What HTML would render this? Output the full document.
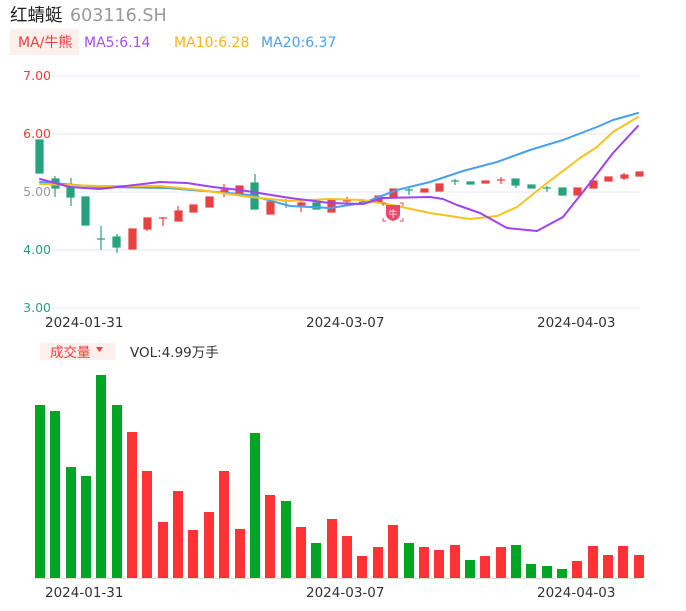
<!DOCTYPE html>
<html><head><meta charset="utf-8"><style>
body{margin:0;background:#fff;width:686px;height:606px;overflow:hidden;font-family:"Liberation Sans","DejaVu Sans","Noto Sans CJK SC",sans-serif}
svg text{font-family:"DejaVu Sans","Noto Sans CJK SC",sans-serif}
</style></head><body>
<svg width="686" height="606" viewBox="0 0 686 606" xmlns="http://www.w3.org/2000/svg">
<text x="10" y="21" font-size="17.5" fill="#222">红蜻蜓</text>
<text x="70" y="21" font-size="17.5" fill="#999">603116.SH</text>
<rect x="10" y="29" width="69" height="26" fill="#fdf0ec"/>
<text x="18" y="47" font-size="14" fill="#f03c3c">MA/牛熊</text>
<text x="84" y="47" font-size="14" fill="#a24ff2">MA5:6.14</text>
<text x="174" y="47" font-size="14" fill="#f8b519">MA10:6.28</text>
<text x="261" y="47" font-size="14" fill="#4aa0f0">MA20:6.37</text>
<g stroke="#e3e8f4" stroke-width="1">
<line x1="52" y1="76" x2="640" y2="76"/><line x1="52" y1="134" x2="640" y2="134"/><line x1="52" y1="192" x2="640" y2="192"/><line x1="52" y1="250" x2="640" y2="250"/><line x1="52" y1="308" x2="640" y2="308"/>
</g>
<g font-size="12.5" text-anchor="end">
<text x="51" y="80" fill="#f03c3c">7.00</text><text x="51" y="138" fill="#f03c3c">6.00</text><text x="51" y="196" fill="#999">5.00</text><text x="51" y="254" fill="#26a17b">4.00</text><text x="51" y="312" fill="#26a17b">3.00</text>
</g>
<g fill="#26a27f" stroke="#26a27f" stroke-width="1.2">
<rect x="36" y="140" width="7" height="33"/>
<line x1="55" y1="176" x2="55" y2="197"/><rect x="52" y="179" width="7" height="9"/>
<line x1="71" y1="178" x2="71" y2="206"/><rect x="67" y="187" width="7" height="10"/>
<rect x="82" y="197" width="7" height="28"/>
<line x1="101" y1="226" x2="101" y2="250"/><line x1="97" y1="239" x2="105" y2="239"/>
<line x1="117" y1="234" x2="117" y2="253"/><rect x="113" y="237" width="7" height="10"/>
<line x1="255" y1="174" x2="255" y2="209"/><rect x="251" y="183" width="7" height="26"/>
<line x1="286" y1="199" x2="286" y2="208"/><line x1="282" y1="201" x2="290" y2="201"/>
<rect x="313" y="203" width="7" height="6"/>
<line x1="409" y1="187" x2="409" y2="195"/><line x1="405" y1="190" x2="413" y2="190"/>
<line x1="455" y1="179" x2="455" y2="185"/><line x1="451" y1="181" x2="459" y2="181"/>
<rect x="467" y="182" width="7" height="2"/>
<line x1="516" y1="179" x2="516" y2="188"/><rect x="512" y="179" width="7" height="6"/>
<rect x="528" y="185" width="7" height="3"/>
<line x1="547" y1="186" x2="547" y2="192"/><line x1="543" y1="188" x2="551" y2="188"/>
<rect x="559" y="188" width="7" height="7"/>
</g>
<g fill="#e84142" stroke="#e84142" stroke-width="1.2">
<rect x="129" y="229" width="7" height="20"/>
<line x1="147" y1="218" x2="147" y2="231"/><rect x="144" y="218" width="7" height="11"/>
<line x1="163" y1="217" x2="163" y2="226"/><line x1="159" y1="218" x2="167" y2="218"/>
<line x1="178" y1="206" x2="178" y2="221"/><rect x="175" y="211" width="7" height="10"/>
<rect x="190" y="205" width="7" height="7"/>
<rect x="206" y="197" width="7" height="10"/>
<line x1="224" y1="184" x2="224" y2="197"/><rect x="221" y="190" width="7" height="3"/>
<rect x="236" y="186" width="7" height="7"/>
<rect x="267" y="202" width="7" height="12"/>
<line x1="301" y1="201" x2="301" y2="212"/><rect x="298" y="203" width="7" height="2"/>
<rect x="328" y="200" width="7" height="12"/>
<line x1="347" y1="197" x2="347" y2="205"/><line x1="343" y1="201" x2="351" y2="201"/>
<line x1="363" y1="199" x2="363" y2="205"/><line x1="359" y1="202" x2="367" y2="202"/>
<rect x="375" y="196" width="7" height="6"/>
<rect x="390" y="189" width="7" height="8"/>
<rect x="421" y="189" width="7" height="3"/>
<rect x="436" y="184" width="7" height="7"/>
<rect x="482" y="181" width="7" height="2"/>
<line x1="501" y1="177" x2="501" y2="184"/><line x1="497" y1="180" x2="505" y2="180"/>
<rect x="574" y="188" width="7" height="7"/>
<rect x="590" y="181" width="7" height="7"/>
<rect x="605" y="177" width="7" height="4"/>
<line x1="624" y1="173" x2="624" y2="180"/><rect x="621" y="175" width="7" height="3"/>
<rect x="636" y="172" width="7" height="4"/>
</g>
<g fill="none" stroke-width="2" stroke-linejoin="round" stroke-linecap="round">
<polyline stroke="#4aa0f0" points="40,182 100,187 167,188 217,192 250,195 290,206 330,208 363,203 397,190 430,182 463,171 497,162 530,150 563,140 597,127 613,120 638,113"/>
<polyline stroke="#f8c21c" points="40,184 100,186 160,186 200,190 250,197 290,201 330,199 363,200 397,206 430,213 470,219 497,216 517,207 547,183 580,158 597,147 613,132 638,117"/>
<polyline stroke="#a042f2" points="40,179 70,187 100,189 160,182 187,183 213,187 240,190 290,198 330,203 363,204 383,198 430,197 443,199 457,205 480,213 507,228 537,231 563,217 590,183 613,153 638,126"/>
</g>
<g>
<path d="M386 205 h14 v9 q0 5 -7 7 q-7 -2 -7 -7z" fill="#f0476a"/>
<text x="393" y="217" font-size="9" fill="#fff" text-anchor="middle">牛</text>
<path d="M383 206 v-3 h3 M400 203 h3 v3 M383 218 v3 h3 M400 221 h3 v-3" stroke="#f0476a" fill="none" stroke-width="1"/>
</g>
<g font-size="13.5" fill="#333">
<text x="45" y="327">2024-01-31</text><text x="306" y="327">2024-03-07</text><text x="537" y="327">2024-04-03</text>
</g>
<rect x="40" y="343" width="75" height="17" fill="#fdf0ec"/>
<text x="50" y="357" font-size="13.5" fill="#f03c3c">成交量</text>
<path d="M96 347 h7 l-3.5 5z" fill="#f03c3c"/>
<text x="130" y="357" font-size="13.5" fill="#333">VOL:4.99万手</text>
<line x1="35" y1="578.5" x2="640" y2="578.5" stroke="#ddd"/>
<g fill="#00a523">
<rect x="35" y="405" width="10" height="173"/><rect x="50" y="411" width="10" height="167"/><rect x="66" y="467" width="10" height="111"/><rect x="81" y="476" width="10" height="102"/><rect x="96" y="375" width="10" height="203"/><rect x="112" y="405" width="10" height="173"/>
<rect x="250" y="433" width="10" height="145"/><rect x="281" y="501" width="10" height="77"/><rect x="311" y="543" width="10" height="35"/>
<rect x="404" y="543" width="10" height="35"/><rect x="465" y="560" width="10" height="18"/><rect x="511" y="545" width="10" height="33"/><rect x="526" y="564" width="10" height="14"/><rect x="542" y="566" width="10" height="12"/><rect x="557" y="569" width="10" height="9"/>
</g>
<g fill="#ff3236">
<rect x="127" y="432" width="10" height="146"/><rect x="142" y="471" width="10" height="107"/><rect x="158" y="522" width="10" height="56"/><rect x="173" y="491" width="10" height="87"/><rect x="188" y="530" width="10" height="48"/><rect x="204" y="512" width="10" height="66"/><rect x="219" y="471" width="10" height="107"/><rect x="235" y="529" width="10" height="49"/>
<rect x="265" y="495" width="10" height="83"/><rect x="296" y="527" width="10" height="51"/><rect x="327" y="519" width="10" height="59"/><rect x="342" y="536" width="10" height="42"/><rect x="357" y="556" width="10" height="22"/><rect x="373" y="547" width="10" height="31"/><rect x="388" y="525" width="10" height="53"/>
<rect x="419" y="547" width="10" height="31"/><rect x="434" y="550" width="10" height="28"/><rect x="450" y="545" width="10" height="33"/><rect x="480" y="556" width="10" height="22"/><rect x="496" y="547" width="10" height="31"/>
<rect x="572" y="561" width="10" height="17"/><rect x="588" y="546" width="10" height="32"/><rect x="603" y="555" width="10" height="23"/><rect x="618" y="546" width="10" height="32"/><rect x="634" y="555" width="10" height="23"/>
</g>
<g font-size="13.5" fill="#333">
<text x="45" y="597">2024-01-31</text><text x="306" y="597">2024-03-07</text><text x="537" y="597">2024-04-03</text>
</g>
</svg>
</body></html>
